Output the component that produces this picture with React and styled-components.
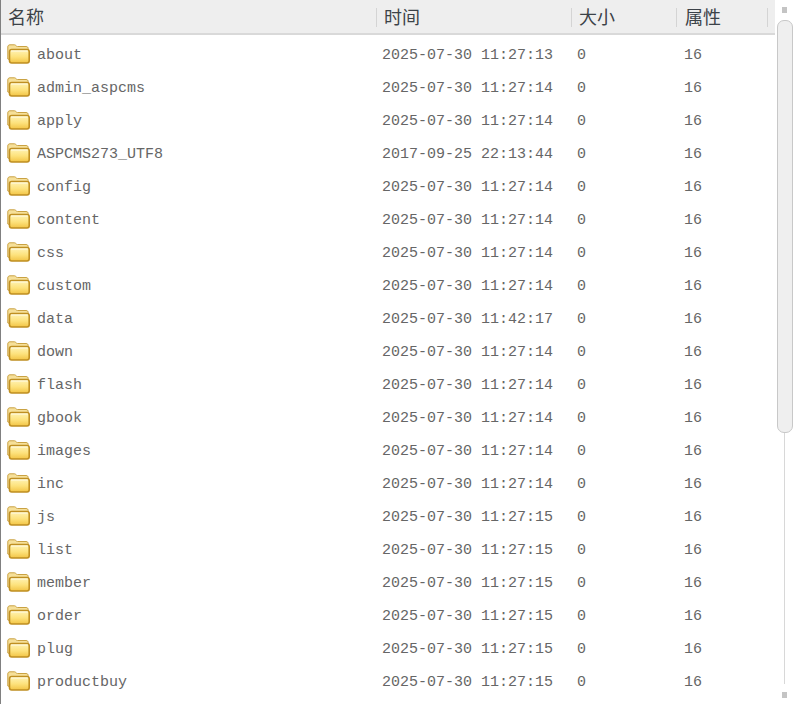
import React from "react";
import styled, { createGlobalStyle } from "styled-components";

const Global = createGlobalStyle`
  html, body { margin: 0; padding: 0; background: #fff; overflow: hidden; }
`;

const Window = styled.div`
  width: 794px;
  height: 704px;
  display: flex;
  overflow: hidden;
  background: #fff;
  border-left: 1px solid #808080;
  box-sizing: border-box;
`;

const Main = styled.div`
  width: 774px;
  display: flex;
  flex-direction: column;
`;

const Header = styled.div`
  display: grid;
  grid-template-columns: 376px 195px 105px 91px;
  height: 35px;
  box-sizing: border-box;
  background: #eeeeee;
  border-bottom: 2px solid #d9d9d9;
  margin-bottom: 4px;
`;

const HeaderCell = styled.div`
  font: 18px "Noto Sans CJK SC", sans-serif;
  color: #3c4248;
  line-height: 33px;
  padding-left: ${(p) => p.$pad}px;
  position: relative;
  &::after {
    content: "";
    position: absolute;
    right: 0;
    top: 8px;
    width: 1px;
    height: 19px;
    background: #d4d4d4;
  }
`;

const Row = styled.div`
  display: grid;
  grid-template-columns: 381px 195px 107px 91px;
  height: 33px;
  align-items: center;
  font: 15px "Liberation Mono", monospace;
  color: #666;
`;

const NameCell = styled.div`
  display: flex;
  align-items: center;
  gap: 7px;
  padding-left: 6px;
`;

const FolderSvg = styled.svg`
  width: 23px;
  height: 20px;
  margin-bottom: 4px;
  flex: none;
`;

const Scrollbar = styled.div`
  width: 19px;
  display: flex;
  flex-direction: column;
  align-items: center;
  background-color: #fff;
  background-image: radial-gradient(#ececec 0.6px, transparent 0.7px);
  background-size: 2px 2px;
`;

const ArrowNub = styled.div`
  width: 5px;
  height: 6px;
  background: #c4c4c4;
  margin-top: ${(p) => p.$top}px;
`;

const Thumb = styled.div`
  width: 16px;
  height: 413px;
  margin-top: 7px;
  box-sizing: border-box;
  background: #efefef;
  border: 1px solid #c8c8c8;
  border-radius: 7px;
`;

const Track = styled.div`
  width: 1px;
  height: 251px;
  background: #d8d8d8;
`;

const FolderIcon = () => (
  <FolderSvg viewBox="0 0 23 20">
    <defs>
      <linearGradient id="front" x1="0" y1="0" x2="0" y2="1">
        <stop offset="0" stopColor="#fff4b8" />
        <stop offset="0.55" stopColor="#fde27c" />
        <stop offset="1" stopColor="#f2c445" />
      </linearGradient>
    </defs>
    <path
      d="M0.8 15V3C0.8 1.6 1.6 0.8 3 0.8h4.5c1.3 0 1.6 1.7 3 1.7H19c1.4 0 2.2 0.8 2.2 2.2V7H4v9z"
      fill="#f6e09a"
      stroke="#c9a243"
      strokeWidth="1"
    />
    <rect x="2.5" y="5.5" width="19.7" height="13.5" rx="2.2" fill="url(#front)" stroke="#bf8f22" strokeWidth="1.6" />
    <path d="M4 7h16.7" stroke="#fffbe6" strokeWidth="1" />
  </FolderSvg>
);

const rows = [
  ["about", "2025-07-30 11:27:13"],
  ["admin_aspcms", "2025-07-30 11:27:14"],
  ["apply", "2025-07-30 11:27:14"],
  ["ASPCMS273_UTF8", "2017-09-25 22:13:44"],
  ["config", "2025-07-30 11:27:14"],
  ["content", "2025-07-30 11:27:14"],
  ["css", "2025-07-30 11:27:14"],
  ["custom", "2025-07-30 11:27:14"],
  ["data", "2025-07-30 11:42:17"],
  ["down", "2025-07-30 11:27:14"],
  ["flash", "2025-07-30 11:27:14"],
  ["gbook", "2025-07-30 11:27:14"],
  ["images", "2025-07-30 11:27:14"],
  ["inc", "2025-07-30 11:27:14"],
  ["js", "2025-07-30 11:27:15"],
  ["list", "2025-07-30 11:27:15"],
  ["member", "2025-07-30 11:27:15"],
  ["order", "2025-07-30 11:27:15"],
  ["plug", "2025-07-30 11:27:15"],
  ["productbuy", "2025-07-30 11:27:15"],
];

const columns = [
  ["名称", 7],
  ["时间", 7],
  ["大小", 7],
  ["属性", 8],
];

export default function App() {
  return (
    <Window>
      <Global />
      <Main>
        <Header>
          {columns.map(([label, pad]) => (
            <HeaderCell key={label} $pad={pad}>{label}</HeaderCell>
          ))}
        </Header>
        {rows.map(([name, time]) => (
          <Row key={name}>
            <NameCell>
              <FolderIcon />
              <span>{name}</span>
            </NameCell>
            <div>{time}</div>
            <div>0</div>
            <div>16</div>
          </Row>
        ))}
      </Main>
      <Scrollbar>
        <ArrowNub $top={7} />
        <Thumb />
        <Track />
        <ArrowNub $top={8} />
      </Scrollbar>
    </Window>
  );
}
